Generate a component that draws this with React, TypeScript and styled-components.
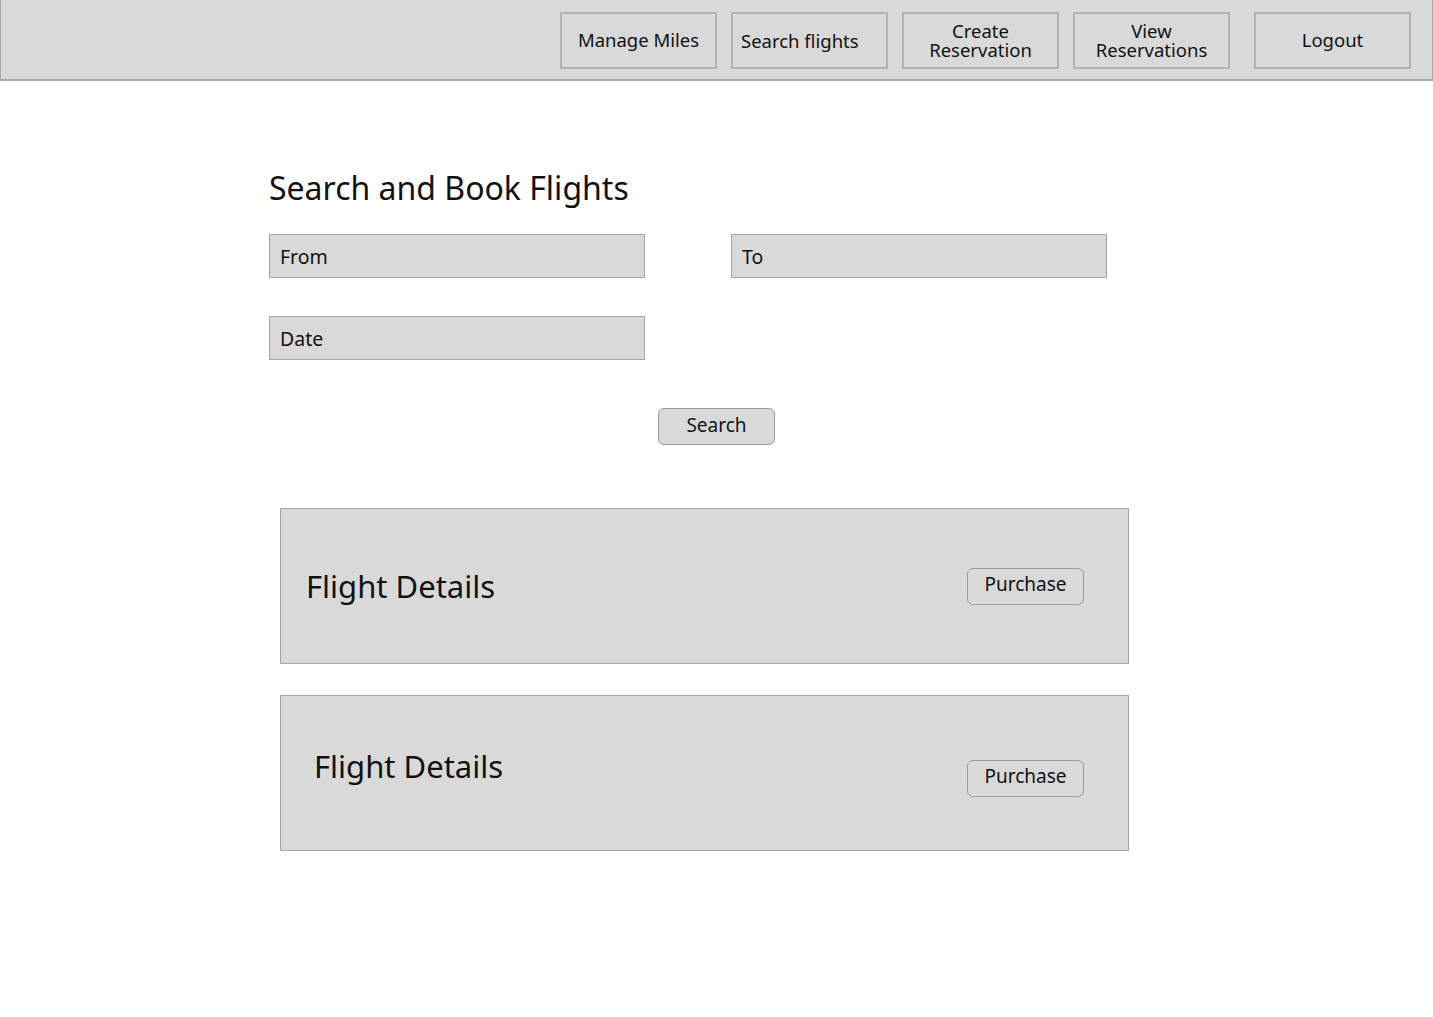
import styled, { createGlobalStyle } from "styled-components";

const GlobalStyle = createGlobalStyle`
  body {
    margin: 0;
    background: #ffffff;
    font-family: "Noto Sans", "Liberation Sans", sans-serif;
    color: #111;
  }
`;

const NavBar = styled.nav`
  height: 81px;
  box-sizing: border-box;
  background-color: #d9d9d9;
  border: 1px solid #a9a9a9;
  border-top: none;
  border-bottom-width: 2px;
  display: flex;
  justify-content: flex-end;
  align-items: flex-start;
  padding: 12px 21px 0 0;
`;

const NavButton = styled.button<{ $left?: boolean; $gap?: number }>`
  width: 157px;
  height: 57px;
  margin-left: ${(p) => p.$gap ?? 14}px;
  background-color: #d9d9d9;
  border: 2px solid #b3b3b3;
  font-family: inherit;
  font-size: 18.5px;
  line-height: 19px;
  color: #111;
  text-align: ${(p) => (p.$left ? "left" : "center")};
  padding: ${(p) => (p.$left ? "0 8px 0" : "0 4px 2px")};
  cursor: pointer;
`;

const Main = styled.main`
  width: 895px;
  margin: 0 auto;
  padding-top: 88px;
`;

const Heading = styled.h1`
  margin: 0 0 27px;
  font-size: 32px;
  font-weight: 400;
  line-height: 38px;
`;

const FormGrid = styled.div`
  display: grid;
  grid-template-columns: 376px 376px;
  column-gap: 86px;
  row-gap: 38px;
`;

const Field = styled.input`
  height: 44px;
  box-sizing: border-box;
  background-color: #d9d9d9;
  border: 1px solid #a6a6a6;
  padding: 0 10px 0;
  font-family: inherit;
  font-size: 19.5px;
  color: #111;

  &::placeholder {
    color: #111;
  }
`;

const SearchRow = styled.div`
  display: flex;
  justify-content: center;
  margin-top: 48px;
`;

const PillButton = styled.button`
  width: 117px;
  height: 37px;
  background-color: #d9d9d9;
  border: 1px solid #9c9c9c;
  border-radius: 6px;
  padding: 0 0 4px;
  font-family: inherit;
  font-size: 19px;
  color: #111;
  cursor: pointer;
`;

const Results = styled.section`
  margin: 63px 0 0 11px;
  width: 849px;
  display: flex;
  flex-direction: column;
  gap: 31px;
`;

const FlightCard = styled.div`
  height: 156px;
  box-sizing: border-box;
  background-color: #d9d9d9;
  border: 1px solid #a6a6a6;
  display: flex;
  align-items: center;
  justify-content: space-between;
  padding: 0 44px 0 25px;
`;

const FlightTitle = styled.h2<{ $shift: number; $indent: number }>`
  margin: 0;
  font-size: 31px;
  font-weight: 400;
  transform: translate(${(p) => p.$indent}px, ${(p) => p.$shift}px);
`;

const PurchaseButton = styled(PillButton)<{ $shift: number }>`
  transform: translateY(${(p) => p.$shift}px);
`;

const flights = [
  { id: 1, titleShift: 0, indent: 0, buttonShift: 0 },
  { id: 2, titleShift: -7, indent: 8, buttonShift: 5 },
];

export default function App() {
  return (
    <>
      <GlobalStyle />
      <NavBar>
        <NavButton $gap={0}>Manage Miles</NavButton>
        <NavButton $left>Search flights</NavButton>
        <NavButton>
          Create
          <br />
          Reservation
        </NavButton>
        <NavButton>
          View
          <br />
          Reservations
        </NavButton>
        <NavButton $gap={24}>Logout</NavButton>
      </NavBar>
      <Main>
        <Heading>Search and Book Flights</Heading>
        <FormGrid>
          <Field placeholder="From" />
          <Field placeholder="To" />
          <Field placeholder="Date" />
        </FormGrid>
        <SearchRow>
          <PillButton>Search</PillButton>
        </SearchRow>
        <Results>
          {flights.map((f) => (
            <FlightCard key={f.id}>
              <FlightTitle $shift={f.titleShift} $indent={f.indent}>
                Flight Details
              </FlightTitle>
              <PurchaseButton $shift={f.buttonShift}>Purchase</PurchaseButton>
            </FlightCard>
          ))}
        </Results>
      </Main>
    </>
  );
}
